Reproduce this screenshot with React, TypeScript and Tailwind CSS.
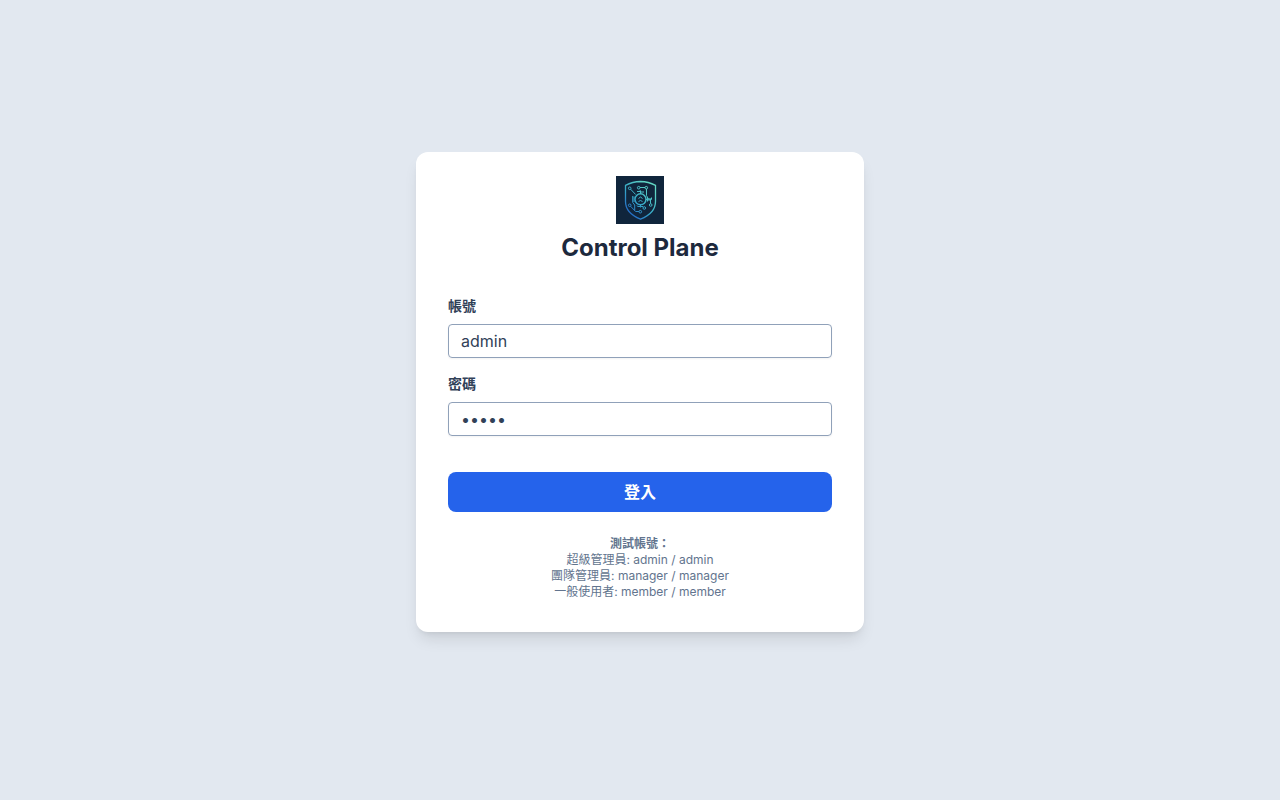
import { useState } from 'react';
import type { FormEvent } from 'react';

function ShieldLogo() {
  return (
    <svg className="size-12" viewBox="0 0 48 48" role="img" aria-label="Control Plane" fill="none">
      <defs>
        <linearGradient id="edge" x1="8" y1="36" x2="34" y2="10" gradientUnits="userSpaceOnUse">
          <stop offset="0" stopColor="#205fc4" />
          <stop offset="0.5" stopColor="#38abc8" />
          <stop offset="1" stopColor="#62d6c4" />
        </linearGradient>
      </defs>
      <rect width="48" height="48" fill="#10253c" />
      <path
        d="M24.500 5.500C19 5.600 14 7 9.500 9.300V25.500C9.500 34 16.500 40 24.500 43.200C32.500 40 39.500 34 39.500 25.500V9.300C35 7 30 5.600 24.500 5.500Z"
        stroke="url(#edge)"
        strokeWidth="1.300"
      />
      <g stroke="url(#edge)" strokeWidth="1">
        <circle cx="24.500" cy="23.300" r="5.500" strokeWidth="1.400" />
        <circle cx="13.700" cy="12.300" r="1.300" />
        <circle cx="22.700" cy="11.700" r="1.300" />
        <circle cx="30.300" cy="11.700" r="1.300" />
        <circle cx="13.700" cy="29.300" r="1.300" />
        <circle cx="24.300" cy="35.700" r="1.300" />
        <circle cx="28.300" cy="32" r="1.300" />
        <circle cx="34.700" cy="29" r="1.300" />
        <path d="M14.600 13.200l5 5.300M24 11.500h5M30.500 13v6.500l2 3.800h3M34.500 22.500v5.200M21 15.500h3v-1M24.500 14.500v3.500M24.500 16h3.500M16.700 20v6.500l2 2.500v5.500M18 20.500v5.500M30 23.500h2.500M31.500 21v4.500M14.600 30.300l5 5.200h3.400M24.500 29v2.500M21.500 30.500h5.500M21 29.500l1 1M33 22v3M35.500 21.500v2" />
        <path d="M22.500 22.500l2-1.500 2 1.500M22.500 25.500l2-1 2 1" />
      </g>
    </svg>
  );
}

type FieldProps = {
  id: string;
  label: string;
  type: string;
  value: string;
  onChange: (value: string) => void;
};

function Field({ id, label, type, value, onChange }: FieldProps) {
  return (
    <div>
      <label htmlFor={id} className="mb-2 block text-sm font-bold text-slate-700">
        {label}
      </label>
      <input
        id={id}
        type={type}
        value={value}
        onChange={(e) => onChange(e.target.value)}
        className="block w-full rounded border border-slate-400 px-3 py-1.5 text-base leading-5 text-slate-700 shadow-xs outline-none focus:border-blue-500"
      />
    </div>
  );
}

const accounts = [
  '超級管理員: admin / admin',
  '團隊管理員: manager / manager',
  '一般使用者: member / member',
];

export default function App() {
  const [username, setUsername] = useState('admin');
  const [password, setPassword] = useState('admin');

  return (
    <main className="flex min-h-screen items-center justify-center bg-slate-200 font-['Inter','Noto_Sans_CJK_TC',sans-serif]">
      <div className="w-full max-w-md">
        <form
          onSubmit={(e: FormEvent) => e.preventDefault()}
          className="mb-4 rounded-xl bg-white px-8 pt-6 pb-8 shadow-lg"
        >
          <header className="mb-8 flex flex-col items-center gap-2">
            <ShieldLogo />
            <h1 className="text-2xl font-bold text-slate-800">Control Plane</h1>
          </header>
          <div className="flex flex-col gap-4">
            <Field id="username" label="帳號" type="text" value={username} onChange={setUsername} />
            <Field id="password" label="密碼" type="password" value={password} onChange={setPassword} />
          </div>
          <button
            type="submit"
            className="mt-9 w-full rounded-lg bg-[#2563eb] px-4 py-2 font-bold text-white hover:bg-blue-700"
          >
            登入
          </button>
          <div className="mt-6 text-center text-xs text-slate-500">
            <p className="font-bold">測試帳號：</p>
            {accounts.map((account) => (
              <p key={account}>{account}</p>
            ))}
          </div>
        </form>
      </div>
    </main>
  );
}
